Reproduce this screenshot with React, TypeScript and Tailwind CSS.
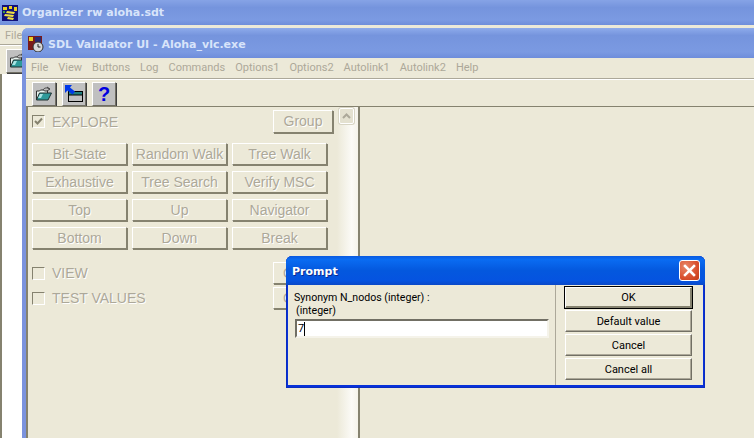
import React from "react";

const ui = "font-['Liberation_Sans',sans-serif]";

function BackIcon() {
  return (
    <svg width="16" height="16" viewBox="0 0 16 16" className="shrink-0">
      <rect width="16" height="16" fill="#10107a" />
      <path d="M1 2h4v3H1zM7 1h3v3H7zM12 2h3v4h-3z" fill="#e8d020" />
      <path d="M5 6l8 1-1 2-8-1zM3 9l9 1-1 2-9-1zM6 12l6 1-1 2-6-1z" fill="#f0e040" />
      <path d="M1 6h2v2H1z" fill="#40a040" />
    </svg>
  );
}

function FrontIcon() {
  return (
    <svg width="16" height="16" viewBox="0 0 16 16" className="shrink-0">
      <rect width="14" height="14" fill="#7a1a1a" />
      <path d="M1 1h4v4H1z" fill="#e8d020" />
      <path d="M7 1h6v5H7z" fill="#2a2a70" />
      <circle cx="10" cy="11" r="5" fill="#d8d8d8" stroke="#303030" />
      <path d="M10 8v3h2.500" stroke="#202020" fill="none" />
    </svg>
  );
}

function FolderIcon() {
  return (
    <svg width="18" height="16" viewBox="0 0 18 16">
      <path d="M8 4c1-2 4-3 6-1" stroke="#404040" fill="none" />
      <path d="M12 1l3 2-3 2" fill="none" stroke="#404040" />
      <path d="M1.500 14V5h3l1-1h3l1 1h3v2" fill="#e8f4f0" stroke="#303030" />
      <path d="M1.500 14l3-7h12l-3.500 7z" fill="#2e9a9a" stroke="#203030" />
      <path d="M3 12l2-4h3l-2 4z" fill="#a8e4e4" />
    </svg>
  );
}

function UpWindowIcon() {
  return (
    <svg width="18" height="18" viewBox="0 0 18 18">
      <rect x="3.500" y="6.500" width="14" height="10" fill="#c0c0c0" stroke="#000" />
      <rect x="4" y="7" width="13" height="3" fill="#208080" />
      <path d="M4 10h13" stroke="#000" />
      <path d="M0 0h7L5 2.500l5 4-2.500 3-5-4L0 8z" fill="#0038e8" />
    </svg>
  );
}

function XpButton({ label, className }: { label: string; className: string }) {
  return (
    <div
      className={`flex items-center justify-center border border-t-white border-l-white border-r-[#85826f] border-b-[#85826f] shadow-[1px_1px_0_#85826f] text-[14px] text-[#aca899] [text-shadow:1px_1px_0_#fff] ${className}`}
    >
      {label}
    </div>
  );
}

function DialogButton({ label, isDefault }: { label: string; isDefault?: boolean }) {
  return (
    <div
      className={`flex items-center justify-center bg-[#ece9d8] pt-[2px] font-['Roboto',sans-serif] text-[11px] text-black ${
        isDefault
          ? "h-[21px] outline outline-1 outline-black border border-t-white border-l-white border-r-[#85826f] border-b-[#85826f] shadow-[inset_-1px_-1px_0_#85826f]"
          : "h-[22px] border border-t-white border-l-white border-r-[#716f64] border-b-[#716f64] shadow-[inset_-1px_-1px_0_#aca899]"
      }`}
    >
      {label}
    </div>
  );
}

function CheckBox({ label, checked }: { label: string; checked?: boolean }) {
  return (
    <div className="flex items-center gap-[7px]">
      <div className="flex h-[13px] w-[13px] items-center justify-center border border-t-[#85826f] border-l-[#85826f] border-r-white border-b-white">
        {checked && (
          <svg width="9" height="9" viewBox="0 0 9 9">
            <path d="M1 4l2.500 2.500L8 1.500" stroke="#85826f" strokeWidth="2" fill="none" />
          </svg>
        )}
      </div>
      <span className="text-[14px] leading-4 text-[#aca899] [text-shadow:1px_1px_0_#fff]">{label}</span>
    </div>
  );
}

const rows = [
  ["Bit-State", "Random Walk", "Tree Walk"],
  ["Exhaustive", "Tree Search", "Verify MSC"],
  ["Top", "Up", "Navigator"],
  ["Bottom", "Down", "Break"],
];

const menu = ["File", "View", "Buttons", "Log", "Commands", "Options1", "Options2", "Autolink1", "Autolink2", "Help"];

function Toolbtn({ children }: { children: React.ReactNode }) {
  return (
    <div className="flex h-[24px] w-[24px] items-center justify-center bg-[#c0c0c0] border border-t-white border-l-white border-r-[#716f64] border-b-[#716f64] shadow-[1px_1px_0_#404040]">
      {children}
    </div>
  );
}

export default function App() {
  return (
    <div className={`relative h-[438px] w-[754px] overflow-hidden bg-[#ece9d8] ${ui}`}>
      {/* organizer window behind */}
      <div className="flex h-[25px] items-center gap-[4px] bg-[linear-gradient(#86a3e6_0,#7594dd_30%,#7b9ae2_80%,#6e8ddb_100%)] pl-[2px]">
        <BackIcon />
        <span className="mt-[2px] font-['DejaVu_Sans',sans-serif] text-[11px] font-bold text-[#d8e4fa]">Organizer rw aloha.sdt</span>
      </div>
      <div className="h-[20px] border-b border-[#aca899] pl-[5px] pt-[3px] font-['Roboto',sans-serif] text-[11px] text-[#aca899]">File</div>
      <div className="flex h-[29px] items-start border-t border-white pl-[6px] pt-[3px]">
        <Toolbtn>
          <FolderIcon />
        </Toolbtn>
      </div>
      <div className="h-[364px] w-[22px] border-l-2 border-[#85826f] bg-white" />

      {/* validator window */}
      <div className="absolute left-[22px] top-[28px] flex h-[410px] w-[732px] flex-col rounded-tl-[6px] border-l-[4px] border-[#7b93de] bg-[#ece9d8]">
        <div className="-ml-[4px] flex h-[30px] items-center gap-[4px] rounded-tl-[6px] bg-[linear-gradient(#8eabeb_0,#7594dd_25%,#7b9ae2_80%,#6e8ddb_100%)] pl-[6px] pt-[2px]">
          <FrontIcon />
          <span className="mt-[2px] font-['DejaVu_Sans',sans-serif] text-[11px] font-bold text-[#d8e4fa]">SDL Validator UI - Aloha_vlc.exe</span>
        </div>
        <div className="flex h-[20px] items-center gap-[10px] pl-[5px] font-['Roboto',sans-serif] text-[11px] text-[#aca899]">
          {menu.map((m) => (
            <span key={m}>{m}</span>
          ))}
        </div>
        <div className="h-[2px] border-t border-b border-t-[#aca899] border-b-white" />
        <div className="flex h-[26px] items-start gap-[6px] pl-[6px] pt-[2px]">
          <Toolbtn>
            <FolderIcon />
          </Toolbtn>
          <Toolbtn>
            <UpWindowIcon />
          </Toolbtn>
          <Toolbtn>
            <span className="text-[20px] font-bold leading-none text-[#0000e0]">?</span>
          </Toolbtn>
        </div>

        <div className="flex flex-1">
          {/* left pane */}
          <div className="flex w-[311px] flex-col border-l-2 border-t border-[#85826f] pl-[4px] pr-[4px] pt-[3px]">
            <div className="flex h-[24px] items-center justify-between pb-[1px]">
              <CheckBox label="EXPLORE" checked />
              <XpButton label="Group" className="h-[23px] w-[60px]" />
            </div>
            <div className="mt-[9px] flex w-[296px] flex-col gap-[6px]">
              {rows.map((row) => (
                <div key={row[0]} className="flex gap-[5px]">
                  {row.map((b) => (
                    <XpButton key={b} label={b} className="h-[22px] w-[95px]" />
                  ))}
                </div>
              ))}
            </div>
            <div className="mt-[13px] flex h-[22px] items-center justify-between">
              <CheckBox label="VIEW" />
              <XpButton label="C" className="h-[22px] w-[60px] justify-start! pl-[9px]" />
            </div>
            <div className="mt-[3px] flex h-[22px] items-center justify-between">
              <CheckBox label="TEST VALUES" />
              <XpButton label="C" className="h-[22px] w-[60px] justify-start! pl-[9px]" />
            </div>
          </div>
          {/* scrollbar */}
          <div className="w-[21px] border-t border-[#85826f] bg-[linear-gradient(90deg,#ece9d8,#fbfaf6_70%,#f5f3ea)] pl-[2px] pt-[1px]">
            <div className="flex h-[16px] w-[15px] items-center justify-center rounded-[2px] border border-white bg-[#e4e1d0] shadow-[0_0_0_1px_#d8d5c4]">
              <svg width="9" height="6" viewBox="0 0 9 6">
                <path d="M1 5l3.500-3.500L8 5" stroke="#aca899" strokeWidth="2" fill="none" />
              </svg>
            </div>
          </div>
          {/* right pane */}
          <div className="flex-1 border-l-2 border-t border-[#85826f]" />
        </div>
      </div>

      {/* prompt dialog */}
      <div className="absolute left-[286px] top-[256px] flex h-[132px] w-[419px] flex-col rounded-t-[6px] bg-[#0831d9] shadow-[inset_0_0_0_1px_#0a2cc0]">
        <div className="flex h-[29px] items-center justify-between rounded-t-[6px] bg-[linear-gradient(#0a5ae0_0,#0a6cf2_12%,#0458de_50%,#0553e0_85%,#0a48c8_100%)] pl-[6px] pr-[5px]">
          <span className="mt-[4px] font-['DejaVu_Sans',sans-serif] text-[11px] font-bold text-white [text-shadow:1px_1px_0_#0a2a90]">Prompt</span>
          <div className="flex h-[21px] w-[21px] items-center justify-center rounded-[3px] border border-white bg-[radial-gradient(circle_at_30%_30%,#e8886a,#d9502e_60%,#c23a18)]">
            <svg width="13" height="13" viewBox="0 0 13 13">
              <path d="M2 2l9 9M11 2l-9 9" stroke="#fff" strokeWidth="2.500" strokeLinecap="square" />
            </svg>
          </div>
        </div>
        <div className="mx-[2px] mb-[3px] flex flex-1 bg-[#ece9d8]">
          <div className="flex w-[268px] flex-col border-r border-[#aca899] pl-[6px] pt-[6px] font-['Roboto',sans-serif] text-[10.6px] leading-[13px] text-black">
            <div>Synonym N_nodos (integer) :</div>
            <div className="pl-[2px]">(integer)</div>
            <div className="ml-[1px] mt-[2px] flex h-[19px] w-[254px] items-center border-2 border-t-[#716f64] border-l-[#716f64] border-r-[#f5f3ea] border-b-[#f5f3ea] bg-white pl-[1px] text-[11px]">
              7<span className="h-[14px] w-px bg-black" />
            </div>
          </div>
          <div className="flex flex-1 flex-col gap-[2px] pl-[9px] pr-[11px] pt-[2px]">
            <DialogButton label="OK" isDefault />
            <DialogButton label="Default value" />
            <DialogButton label="Cancel" />
            <DialogButton label="Cancel all" />
          </div>
        </div>
      </div>
    </div>
  );
}
